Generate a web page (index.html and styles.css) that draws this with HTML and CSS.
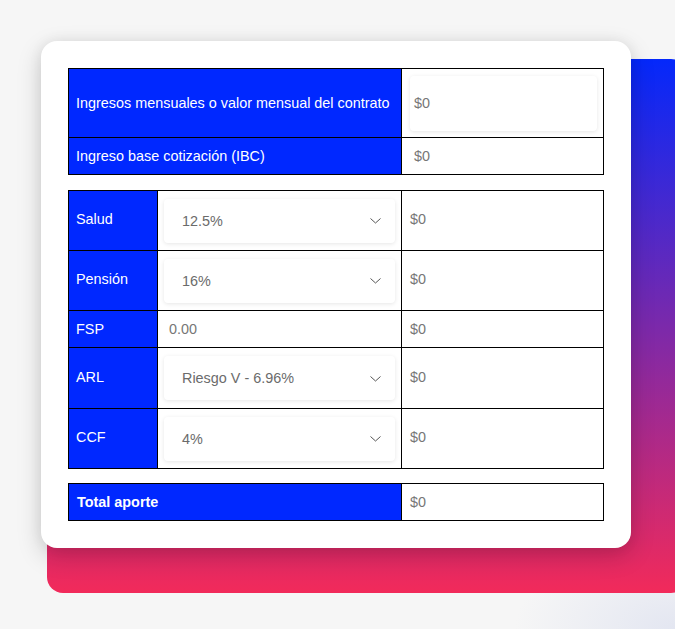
FILE: index.html
```html
<!DOCTYPE html>
<html lang="es">
<head>
<meta charset="utf-8">
<title>Aportes</title>
<link rel="stylesheet" href="styles.css">
</head>
<body>
<div class="stage">
  <div class="card">
    <div class="grid g2">
      <div class="lbl tall">Ingresos mensuales o valor mensual del contrato</div>
      <div class="val tall"><div class="field">$0</div></div>
      <div class="lbl short">Ingreso base cotización (IBC)</div>
      <div class="val short"><div class="plain">$0</div></div>
    </div>

    <div class="grid g3">
      <div class="lbl r60">Salud</div>
      <div class="mid r60"><div class="select"><span>12.5%</span><svg class="chev" width="11" height="6" viewBox="0 0 11 6"><path d="M0.5 0.5 L5.5 5 L10.5 0.5" fill="none" stroke="#555" stroke-width="1"/></svg></div></div>
      <div class="val r60 txt">$0</div>

      <div class="lbl r60">Pensión</div>
      <div class="mid r60"><div class="select"><span>16%</span><svg class="chev" width="11" height="6" viewBox="0 0 11 6"><path d="M0.5 0.5 L5.5 5 L10.5 0.5" fill="none" stroke="#555" stroke-width="1"/></svg></div></div>
      <div class="val r60 txt">$0</div>

      <div class="lbl short">FSP</div>
      <div class="mid short"><div class="num">0.00</div></div>
      <div class="val short txt">$0</div>

      <div class="lbl r61">ARL</div>
      <div class="mid r61"><div class="select"><span>Riesgo V - 6.96%</span><svg class="chev" width="11" height="6" viewBox="0 0 11 6"><path d="M0.5 0.5 L5.5 5 L10.5 0.5" fill="none" stroke="#555" stroke-width="1"/></svg></div></div>
      <div class="val r61 txt">$0</div>

      <div class="lbl r60">CCF</div>
      <div class="mid r60"><div class="select"><span>4%</span><svg class="chev" width="11" height="6" viewBox="0 0 11 6"><path d="M0.5 0.5 L5.5 5 L10.5 0.5" fill="none" stroke="#555" stroke-width="1"/></svg></div></div>
      <div class="val r60 txt">$0</div>
    </div>

    <div class="grid g2 total">
      <div class="lbl short bold">Total aporte</div>
      <div class="val short txt">$0</div>
    </div>
  </div>
</div>
</body>
</html>
```

FILE: styles.css
```css
* { box-sizing: border-box; }
html, body { margin: 0; padding: 0; }
body {
  width: 675px;
  height: 629px;
  overflow: hidden;
  background:
    radial-gradient(ellipse 160px 90px at 100% 100%, #e3e6f1 0%, rgba(227,230,241,0) 100%),
    #f6f6f6;
  font-family: "Liberation Sans", Arial, sans-serif;
  font-size: 14.4px;
}
.stage {
  position: relative;
  padding: 41px 0 0 41px;
  height: 629px;
}
.stage::before {
  content: "";
  position: absolute;
  left: 47px;
  top: 59px;
  width: 640px;
  height: 534px;
  border-radius: 16px;
  background: linear-gradient(to bottom, #0428fb 0%, #f22a5a 100%);
}
.card {
  position: relative;
  width: 590px;
  height: 507px;
  padding: 27px;
  background: #fff;
  border-radius: 16px;
  box-shadow: 0 8px 24px rgba(0,0,0,0.18), 0 0 14px rgba(0,0,0,0.06);
}
.grid {
  display: grid;
  gap: 1px;
  background: #000;
  border: 1px solid #000;
  width: 536px;
}
.g2 { grid-template-columns: 332px 201px; }
.g3 {
  grid-template-columns: 88px 243px 201px;
  margin-top: 15px;
}
.total { margin-top: 14px; }
.tall { height: 68px; }
.short { height: 36px; }
.r60 { height: 59px; }
.r61 { height: 60px; }
.lbl {
  background: #0028ff;
  color: #fff;
  display: flex;
  align-items: center;
  padding-left: 7px;
}
.r60.lbl, .r61.lbl, .r60.txt, .r61.txt { padding-bottom: 3px; }
.tall.lbl { padding-bottom: 1px; }
.bold { font-weight: bold; padding-left: 8px; }
.val, .mid {
  background: #fff;
  display: flex;
  align-items: center;
}
.txt { padding-left: 8px; color: #777; }
.val.tall { padding: 7px 6px 6px 8px; align-items: stretch; }
.field {
  flex: 1;
  display: flex;
  align-items: center;
  padding-left: 4px;
  padding-bottom: 1px;
  color: #777;
  background: #fff;
  border-radius: 4px;
  box-shadow: 0 1px 4px rgba(0,0,0,0.1);
}
.plain { padding-left: 12px; color: #777; }
.mid { padding: 0 6px; }
.select {
  flex: 1;
  height: 44px;
  display: flex;
  align-items: center;
  justify-content: space-between;
  padding: 0 14px 0 18px;
  color: #6b6b6b;
  background: #fff;
  border-radius: 4px;
  box-shadow: 0 1px 4px rgba(0,0,0,0.1);
}
.chev { display: block; margin-top: 1px; }
.num { padding-left: 5px; color: #777; }
```
